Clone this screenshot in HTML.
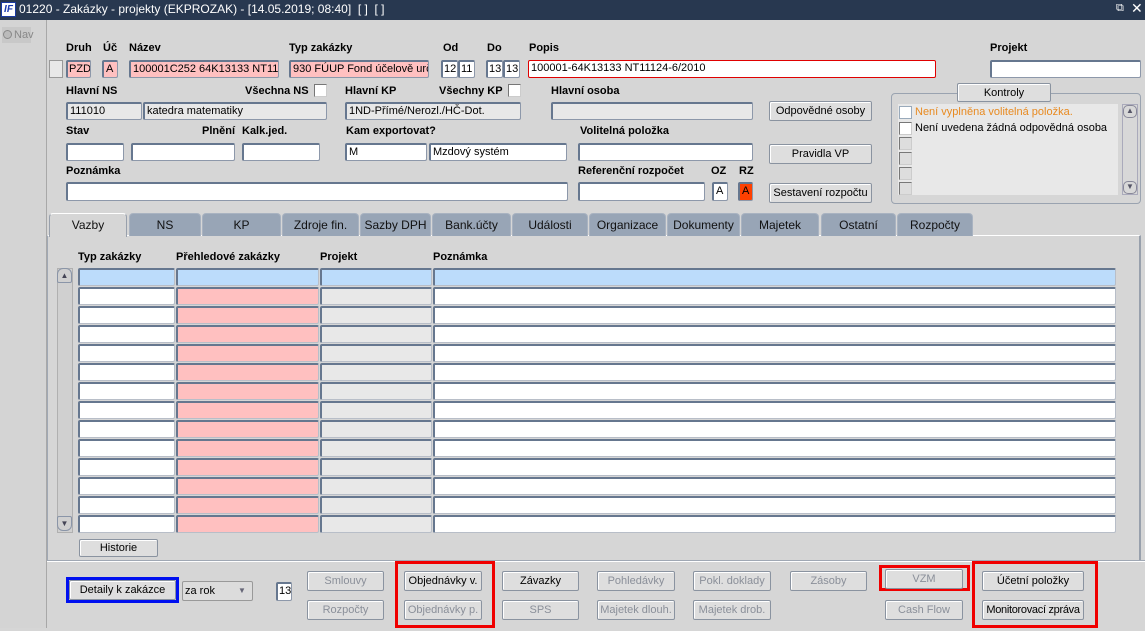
<!DOCTYPE html>
<html><head><meta charset="utf-8">
<style>
*{box-sizing:border-box;margin:0;padding:0}
body{width:1145px;height:631px;overflow:hidden;background:#d6d6d6;font-family:"Liberation Sans",Arial,sans-serif;font-size:11px;color:#000;position:relative}
.a{position:absolute}
.l{position:absolute;font-weight:bold;font-size:11px;white-space:nowrap}
.i{position:absolute;background:#fff;border:1px solid #8d98aa;border-top:2px solid #66778f;border-left:2px solid #66778f;font-size:11px;line-height:15px;padding-left:2px;white-space:nowrap;overflow:hidden;border-radius:2px}
.g{background:#e8e8e8}
.p{background:#ffc0c0}
.b{position:absolute;background:#dedede;border:1px solid #8a93a0;border-radius:2px;box-shadow:inset 1px 1px #fff;font-size:11px;text-align:center;line-height:19px;white-space:nowrap}
.dis{color:#8a8f99}
.t{position:absolute;top:213px;height:23px;background:#98a5b6;border:1px solid #a9b3c1;border-bottom:none;border-radius:4px 4px 0 0;text-align:center;line-height:22px;font-size:12px;color:#111}
.cb{position:absolute;width:13px;height:13px;background:#fff;border:1px solid #777;border-right-color:#ccc;border-bottom-color:#ccc}
.rr{position:absolute;height:18px;border:1px solid #b8bec8;border-top:2px solid #66778f;border-left:2px solid #66778f;border-radius:2px}
</style></head><body>
<div class="a" style="left:0;top:0;width:1145px;height:20px;background:#283850"></div>
<div class="a" style="left:1px;top:2px;width:15px;height:15px;background:#fff;border:1px solid #1a3aa0;color:#1a3ab0;font-weight:bold;font-style:italic;font-size:10px;line-height:13px;text-align:center">IF</div>
<div class="a" style="left:19px;top:2px;color:#fff;font-size:12px;white-space:nowrap">01220 - Zakázky - projekty (EKPROZAK) - [14.05.2019; 08:40]&nbsp; [ ]&nbsp; [ ]</div>
<div class="a" style="left:1116px;top:2px;color:#fff;font-size:11px">⧉</div>
<div class="a" style="left:1131px;top:0px;color:#fff;font-size:14px">✕</div>
<div class="a" style="left:0;top:20px;width:47px;height:611px;background:#d4d4d4;border-right:1px solid #a8a8a8"></div>
<div class="a" style="left:2px;top:27px;width:29px;height:16px;background:#c8c8c8"></div>
<div class="a" style="left:3px;top:30px;width:9px;height:9px;border-radius:50%;background:#bbb;border:1px solid #888"></div>
<div class="a" style="left:14px;top:29px;color:#888;font-size:11px">Nav</div>

<div class="l" style="left:66px;top:42px">Druh</div>
<div class="l" style="left:103px;top:42px">Úč</div>
<div class="l" style="left:129px;top:42px">Název</div>
<div class="l" style="left:289px;top:42px">Typ zakázky</div>
<div class="l" style="left:443px;top:42px">Od</div>
<div class="l" style="left:487px;top:42px">Do</div>
<div class="l" style="left:529px;top:42px">Popis</div>
<div class="l" style="left:990px;top:42px">Projekt</div>
<div class="a" style="left:49px;top:60px;width:14px;height:18px;background:#e8e8e8;border:1px solid #999"></div>
<div class="i p" style="left:66px;top:60px;width:25px;height:18px;padding-left:1px">PZD</div>
<div class="i p" style="left:102px;top:60px;width:16px;height:18px">A</div>
<div class="i p" style="left:129px;top:60px;width:150px;height:18px">100001C252 64K13133 NT111</div>
<div class="i p" style="left:289px;top:60px;width:140px;height:18px">930 FÚUP Fond účelově urče</div>
<div class="i" style="left:441px;top:60px;width:17px;height:18px;padding-left:1px">12</div>
<div class="i" style="left:458px;top:60px;width:17px;height:18px;padding-left:1px">11</div>
<div class="i" style="left:486px;top:60px;width:17px;height:18px;padding-left:1px">13</div>
<div class="i" style="left:503px;top:60px;width:17px;height:18px;padding-left:1px">13</div>
<div class="i" style="left:528px;top:60px;width:408px;height:18px;border:1px solid #e00000">100001-64K13133 NT11124-6/2010</div>
<div class="i" style="left:990px;top:60px;width:151px;height:18px"></div>

<div class="l" style="left:66px;top:85px">Hlavní NS</div>
<div class="l" style="left:245px;top:85px">Všechna NS</div>
<div class="cb" style="left:314px;top:84px"></div>
<div class="l" style="left:345px;top:85px">Hlavní KP</div>
<div class="l" style="left:439px;top:85px">Všechny KP</div>
<div class="cb" style="left:508px;top:84px"></div>
<div class="l" style="left:551px;top:85px">Hlavní osoba</div>
<div class="i g" style="left:66px;top:102px;width:76px;height:18px">111010</div>
<div class="i g" style="left:143px;top:102px;width:184px;height:18px">katedra matematiky</div>
<div class="i g" style="left:345px;top:102px;width:176px;height:18px">1ND-Přímé/Nerozl./HČ-Dot.</div>
<div class="i g" style="left:551px;top:102px;width:202px;height:18px"></div>
<div class="b" style="left:769px;top:101px;width:103px;height:20px">Odpovědné osoby</div>

<div class="a" style="left:891px;top:93px;width:250px;height:111px;border:1px solid #9aa3b0;border-radius:4px"></div>
<div class="b" style="left:957px;top:83px;width:94px;height:19px;line-height:18px">Kontroly</div>
<div class="a" style="left:898px;top:104px;width:220px;height:91px;background:#e8e8e8"></div>
<div class="cb" style="left:899px;top:106px;border-color:#9ab"></div>
<div class="a" style="left:915px;top:106px;color:#e88a20;font-size:11px;white-space:nowrap">Není vyplněna volitelná položka.</div>
<div class="cb" style="left:899px;top:122px"></div>
<div class="a" style="left:915px;top:122px;font-size:11px;white-space:nowrap">Není uvedena žádná odpovědná osoba</div>
<div class="cb" style="left:899px;top:137px;background:#ddd"></div>
<div class="cb" style="left:899px;top:152px;background:#ddd"></div>
<div class="cb" style="left:899px;top:167px;background:#ddd"></div>
<div class="cb" style="left:899px;top:182px;background:#ddd"></div>
<div class="a" style="left:1122px;top:104px;width:16px;height:91px;background:#d8d8d8;border:1px solid #aab"></div>
<div class="a" style="left:1123px;top:105px;width:14px;height:13px;border:1px solid #889;border-radius:5px;font-size:8px;text-align:center;color:#556">▲</div>
<div class="a" style="left:1123px;top:181px;width:14px;height:13px;border:1px solid #889;border-radius:5px;font-size:8px;text-align:center;color:#556">▼</div>

<div class="l" style="left:66px;top:125px">Stav</div>
<div class="l" style="left:202px;top:125px">Plnění</div>
<div class="l" style="left:242px;top:125px">Kalk.jed.</div>
<div class="l" style="left:346px;top:125px">Kam exportovat?</div>
<div class="l" style="left:580px;top:125px">Volitelná položka</div>
<div class="i" style="left:66px;top:143px;width:58px;height:18px"></div>
<div class="i" style="left:131px;top:143px;width:104px;height:18px"></div>
<div class="i" style="left:242px;top:143px;width:78px;height:18px"></div>
<div class="i" style="left:345px;top:143px;width:82px;height:18px">M</div>
<div class="i" style="left:429px;top:143px;width:138px;height:18px">Mzdový systém</div>
<div class="i" style="left:578px;top:143px;width:175px;height:18px"></div>
<div class="b" style="left:769px;top:144px;width:103px;height:20px">Pravidla VP</div>

<div class="l" style="left:66px;top:165px">Poznámka</div>
<div class="l" style="left:578px;top:165px">Referenční rozpočet</div>
<div class="l" style="left:711px;top:165px">OZ</div>
<div class="l" style="left:739px;top:165px">RZ</div>
<div class="i" style="left:66px;top:182px;width:502px;height:19px"></div>
<div class="i" style="left:578px;top:182px;width:127px;height:19px"></div>
<div class="i" style="left:712px;top:182px;width:16px;height:19px">A</div>
<div class="i" style="left:738px;top:182px;width:15px;height:19px;background:#ff4000">A</div>
<div class="b" style="left:769px;top:183px;width:103px;height:20px">Sestavení rozpočtu</div>

<div class="a" style="left:47px;top:235px;width:1094px;height:326px;border:1px solid #a0a8b4;border-top:1px solid #fff;border-right:2px solid #98a0ac"></div>
<div class="t" style="left:49px;width:78px;background:#d6d6d6;border-color:#fff #98a0ac;height:24px">Vazby</div>
<div class="t" style="left:129px;width:72px">NS</div>
<div class="t" style="left:202px;width:79px">KP</div>
<div class="t" style="left:282px;width:77px">Zdroje fin.</div>
<div class="t" style="left:360px;width:71px">Sazby DPH</div>
<div class="t" style="left:432px;width:79px">Bank.účty</div>
<div class="t" style="left:512px;width:76px">Události</div>
<div class="t" style="left:589px;width:77px">Organizace</div>
<div class="t" style="left:667px;width:73px">Dokumenty</div>
<div class="t" style="left:741px;width:78px">Majetek</div>
<div class="t" style="left:821px;width:75px">Ostatní</div>
<div class="t" style="left:897px;width:76px">Rozpočty</div>

<div class="l" style="left:78px;top:251px">Typ zakázky</div>
<div class="l" style="left:176px;top:251px">Přehledové zakázky</div>
<div class="l" style="left:320px;top:251px">Projekt</div>
<div class="l" style="left:433px;top:251px">Poznámka</div>
<div class="a" style="left:57px;top:268px;width:16px;height:265px;background:#d0d0d0;border:1px solid #b0b0b0"></div>
<div class="a" style="left:57px;top:268px;width:15px;height:15px;border:1px solid #8a95a8;border-radius:6px 6px 2px 2px;font-size:8px;text-align:center;line-height:13px;color:#445">▲</div>
<div class="a" style="left:57px;top:516px;width:15px;height:15px;border:1px solid #8a95a8;border-radius:2px 2px 6px 6px;font-size:8px;text-align:center;line-height:13px;color:#445">▼</div>
<div id="rows"></div>
<div class="b" style="left:79px;top:539px;width:79px;height:18px;line-height:17px">Historie</div>

<div class="a" style="left:47px;top:560px;width:1098px;height:1px;background:#a0a8b4"></div>
<div class="a" style="left:47px;top:561px;width:1098px;height:1px;background:#fff"></div>
<div class="a" style="left:66px;top:577px;width:113px;height:26px;border:3px solid #0010f0"></div>
<div class="b" style="left:69px;top:580px;width:107px;height:20px">Detaily k zakázce</div>
<div class="i" style="left:182px;top:581px;width:71px;height:20px;background:#dcdcdc;border:1px solid #999;line-height:18px">za rok</div>
<div class="a" style="left:238px;top:586px;color:#667;font-size:8px">▼</div>
<div class="i" style="left:276px;top:582px;width:16px;height:19px;padding-left:1px">13</div>
<div class="b dis" style="left:307px;top:571px;width:77px;height:20px">Smlouvy</div>
<div class="b dis" style="left:307px;top:600px;width:77px;height:20px">Rozpočty</div>
<div class="a" style="left:395px;top:561px;width:100px;height:67px;border:3px solid #f00000"></div>
<div class="b" style="left:404px;top:571px;width:78px;height:20px">Objednávky v.</div>
<div class="b dis" style="left:404px;top:600px;width:78px;height:20px">Objednávky p.</div>
<div class="b" style="left:502px;top:571px;width:77px;height:20px">Závazky</div>
<div class="b dis" style="left:502px;top:600px;width:77px;height:20px">SPS</div>
<div class="b dis" style="left:597px;top:571px;width:78px;height:20px">Pohledávky</div>
<div class="b dis" style="left:597px;top:600px;width:78px;height:20px">Majetek dlouh.</div>
<div class="b dis" style="left:693px;top:571px;width:78px;height:20px">Pokl. doklady</div>
<div class="b dis" style="left:693px;top:600px;width:78px;height:20px">Majetek drob.</div>
<div class="b dis" style="left:790px;top:571px;width:77px;height:20px">Zásoby</div>
<div class="a" style="left:879px;top:565px;width:91px;height:26px;border:3px solid #f00000"></div>
<div class="b dis" style="left:885px;top:569px;width:78px;height:20px">VZM</div>
<div class="b dis" style="left:885px;top:600px;width:78px;height:20px">Cash Flow</div>
<div class="a" style="left:972px;top:561px;width:126px;height:67px;border:3px solid #f00000"></div>
<div class="b" style="left:982px;top:571px;width:102px;height:20px">Účetní položky</div>
<div class="b" style="left:982px;top:600px;width:102px;height:20px;letter-spacing:-0.3px">Monitorovací zpráva</div>
<div class="a" style="left:0;top:628px;width:1145px;height:3px;background:#d6d6d6"></div>

<script>
var h='';for(var r=0;r<14;r++){var y=268+r*19;var sel=r==0;
h+='<div class="rr" style="left:78px;top:'+y+'px;width:97px;background:'+(sel?'#bcdcfb':'#fff')+'"></div>';
h+='<div class="rr" style="left:176px;top:'+y+'px;width:143px;background:'+(sel?'#bcdcfb':'#ffc0c0')+'"></div>';
h+='<div class="rr" style="left:320px;top:'+y+'px;width:112px;background:'+(sel?'#bcdcfb':'#e8e8e8')+'"></div>';
h+='<div class="rr" style="left:433px;top:'+y+'px;width:683px;background:'+(sel?'#bcdcfb':'#fff')+'"></div>';}
document.getElementById('rows').innerHTML=h;
</script>
</body></html>
